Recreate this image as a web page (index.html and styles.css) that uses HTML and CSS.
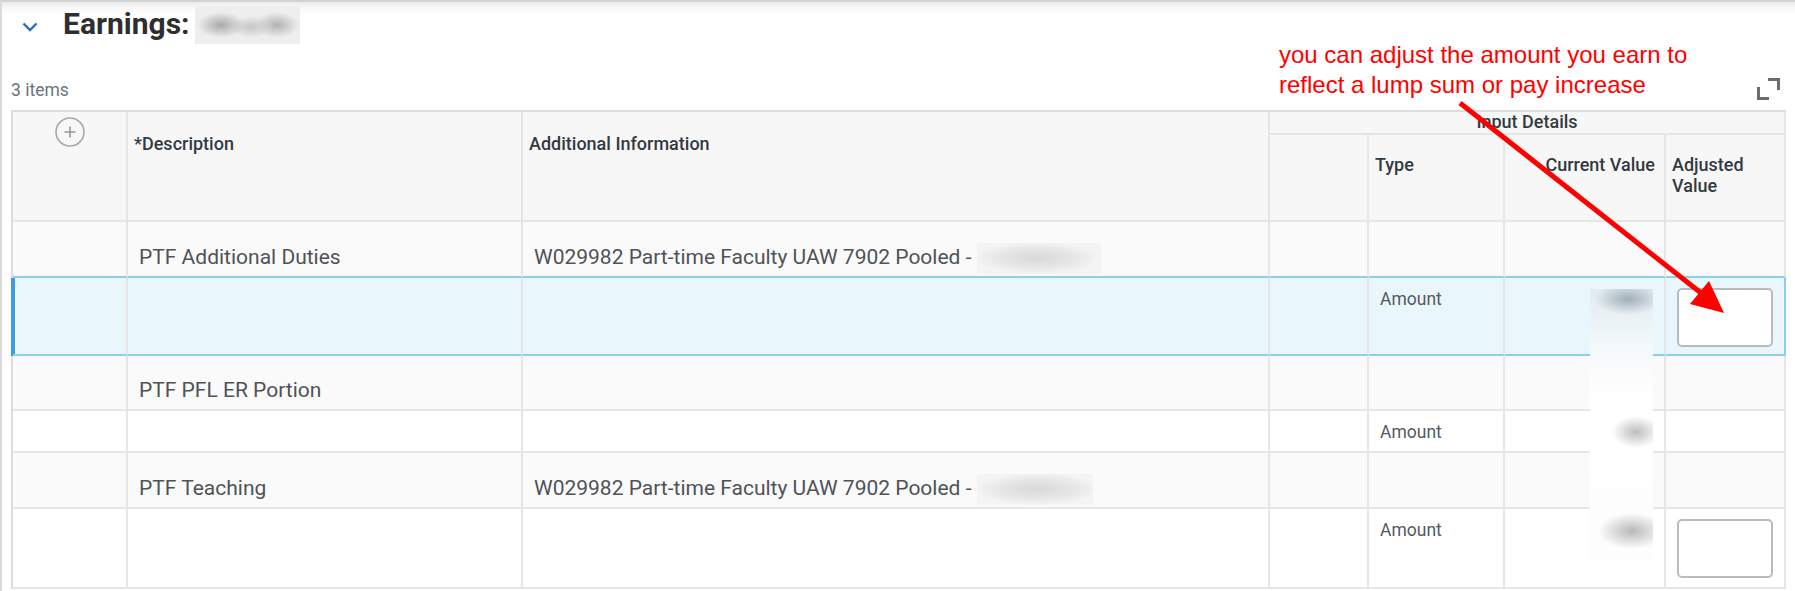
FILE: index.html
```html
<!DOCTYPE html>
<html lang="en">
<head>
<meta charset="utf-8">
<title>Earnings</title>
<link rel="stylesheet" href="styles.css">
</head>
<body>
<div class="panel">
  <div class="head">
    <svg class="chev" width="16" height="12" viewBox="0 0 16 12"><polyline points="1.5,2.5 8,9 14.5,2.5" fill="none" stroke="#2a6ebb" stroke-width="2.4"/></svg>
    <h2 class="title">Earnings:</h2>
    <span class="blur-title"></span>
  </div>
  <div class="meta">
    <span class="count">3 items</span>
    <svg class="expand" width="23" height="23" viewBox="0 0 23 23"><path d="M11 2.5H21.5V13M1.5 10V21.5H12" fill="none" stroke="#6c6c6c" stroke-width="3"/></svg>
  </div>
  <div class="grid-wrap">
    <table class="grid">
      <colgroup>
        <col class="w1"><col class="w2"><col class="w3"><col class="w4"><col class="w5"><col class="w6"><col class="w7">
      </colgroup>
      <thead>
        <tr class="hr1">
          <th rowspan="2" class="c-add"><svg width="30" height="30" viewBox="0 0 30 30"><circle cx="15" cy="15" r="14" fill="none" stroke="#a8a8a8" stroke-width="1.6"/><path d="M15 9.5V20.5M9.5 15H20.5" stroke="#999" stroke-width="1.6"/></svg></th>
          <th rowspan="2" class="h-top">*Description</th>
          <th rowspan="2" class="h-top">Additional Information</th>
          <th colspan="4" class="grp">Input Details</th>
        </tr>
        <tr class="hr2">
          <th class="h-sub"></th>
          <th class="h-sub">Type</th>
          <th class="h-sub num">Current Value</th>
          <th class="h-sub">Adjusted<br>Value</th>
        </tr>
      </thead>
      <tbody>
        <tr class="main r1 pre-sel">
          <td></td>
          <td>PTF Additional Duties</td>
          <td>W029982 Part-time Faculty UAW 7902 Pooled - <span class="blur-inline"></span></td>
          <td></td><td></td><td></td><td></td>
        </tr>
        <tr class="sub r2 sel">
          <td></td><td></td><td></td><td></td>
          <td>Amount</td>
          <td></td>
          <td class="c-field"><span class="field"></span></td>
        </tr>
        <tr class="main r3">
          <td></td>
          <td>PTF PFL ER Portion</td>
          <td></td><td></td><td></td><td></td><td></td>
        </tr>
        <tr class="sub r4">
          <td></td><td></td><td></td><td></td>
          <td>Amount</td>
          <td></td><td></td>
        </tr>
        <tr class="main r5">
          <td></td>
          <td>PTF Teaching</td>
          <td>W029982 Part-time Faculty UAW 7902 Pooled - <span class="blur-inline short"></span></td>
          <td></td><td></td><td></td><td></td>
        </tr>
        <tr class="sub r6">
          <td></td><td></td><td></td><td></td>
          <td>Amount</td>
          <td></td>
          <td class="c-field"><span class="field"></span></td>
        </tr>
      </tbody>
    </table>
    <div class="blur-col"></div>
  </div>
  <p class="note">you can adjust the amount you earn to<br>reflect a lump sum or pay increase</p>
  <svg class="arrow" width="1795" height="591" viewBox="0 0 1795 591"><line x1="1460" y1="103" x2="1701" y2="293" stroke="#ff0000" stroke-width="5"/><polygon points="1690,304 1709,281 1724,313" fill="#ff0000"/></svg>
</div>
</body>
</html>
```

FILE: styles.css
```css
* { box-sizing: border-box; }
html, body { margin: 0; background: #fff; }
body {
  font-family: Roboto, "Noto Sans", "Liberation Sans", sans-serif;
  color: #505458;
}
.panel {
  position: relative;
  height: 591px;
  border-top: 2px solid #d2d2d2;
  border-left: 2px solid #dadada;
  padding: 0 9px;
  background: linear-gradient(#ebebeb, #f7f7f7 5px, #fff 13px);
}
.head {
  display: flex;
  align-items: flex-start;
  height: 44px;
  padding-left: 11px;
}
.chev { margin-top: 19px; flex: none; }
.title {
  margin: 4px 0 0 25px;
  font-size: 30px;
  line-height: 35px;
  font-weight: 700;
  color: #2e2e2e;
}
.blur-title {
  margin: 4px 0 0 5px;
  width: 105px;
  height: 38px;
  background:
    radial-gradient(ellipse 24px 13px at 26px 19px, #a9a9a9, rgba(238,238,238,0)),
    radial-gradient(ellipse 20px 11px at 56px 21px, #c4c4c4, rgba(238,238,238,0)),
    radial-gradient(ellipse 22px 13px at 82px 19px, #b2b2b2, rgba(238,238,238,0)),
    #eeeeee;
}
.meta {
  display: flex;
  justify-content: space-between;
  align-items: flex-start;
  margin-top: 34px;
  height: 21px;
}
.count {
  font-size: 17.5px;
  line-height: 21px;
  color: #6b747d;
}
.expand { margin: -3px 6px 0 0; }
.grid-wrap { position: relative; margin-top: 9px; }
.grid {
  border-collapse: separate;
  border-spacing: 0;
  table-layout: fixed;
  width: 1775px;
  border-top: 2px solid #dcdcdc;
  border-left: 2px solid #dcdcdc;
}
.w1 { width: 115px; }
.w2 { width: 395px; }
.w3 { width: 747px; }
.w4 { width: 99px; }
.w5 { width: 136px; }
.w6 { width: 161px; }
.w7 { width: 120px; }
.grid th, .grid td {
  border-right: 2px solid #e6e6e6;
  border-bottom: 2px solid #e6e6e6;
  padding: 0;
}
.grid th {
  background: #f7f7f7;
  font-size: 18px;
  line-height: 21px;
  font-weight: 500;
  color: #333a42;
  text-align: left;
  vertical-align: top;
  padding-left: 6px;
}
.hr1 { height: 23px; }
.hr2 { height: 87px; }
.grid th.c-add { padding: 5px 0 0; text-align: center; }
.c-add svg { display: block; margin: 0 auto; }
.grid th.h-top { padding-top: 21px; }
.grid th.grp {
  text-align: center;
  line-height: 19px;
  padding-left: 0;
}
.grid th.h-sub { padding-top: 19px; }
.grid th.num { text-align: right; padding-right: 9px; }
.r1 { height: 56px; }
.r2 { height: 78px; }
.r3 { height: 55px; }
.r4 { height: 42px; }
.r5 { height: 56px; }
.r6 { height: 80px; }
.main td {
  background: #fafafa;
  font-size: 21px;
  line-height: 24px;
  vertical-align: bottom;
  padding: 0 11px 7px;
  white-space: nowrap;
  color: #4f5357;
}
.sub td {
  background: #fff;
  font-size: 17.5px;
  line-height: 21px;
  vertical-align: top;
  padding: 11px 11px 0;
  color: #55595d;
}
.sub td.c-field { padding: 10px 0 0 11px; }
.pre-sel td { border-bottom-color: #8fcdef; }
.sel td {
  background: #e9f6fc;
  border-bottom-color: #8fcdef;
}
.sel td:first-child { box-shadow: -2px 0 0 #3b9fdf, inset 2px 0 0 #3b9fdf; }
.sel td:last-child { border-right-color: #8fcdef; }
.field {
  display: block;
  width: 96px;
  height: 59px;
  border: 2px solid #b6bcc2;
  border-radius: 5px;
  background: #fff;
}
.blur-inline {
  display: inline-block;
  width: 124px;
  height: 31px;
  margin: -2px 0 -5px 0;
  vertical-align: -5px;
  background: radial-gradient(ellipse 62px 16px at 60px 15px, #d9d9d9, #e6e6e6 60%, #f4f4f4);
}
.blur-inline.short { width: 116px; }
.blur-col {
  position: absolute;
  left: 1579px;
  top: 179px;
  width: 63px;
  height: 272px;
  background:
    radial-gradient(ellipse 34px 16px at 38px 10px, rgba(150,165,176,.85), rgba(255,255,255,0)),
    radial-gradient(ellipse 24px 16px at 46px 143px, rgba(155,155,155,.65), rgba(255,255,255,0)),
    radial-gradient(ellipse 34px 18px at 42px 242px, rgba(155,155,155,.7), rgba(255,255,255,0)),
    linear-gradient(#e2ebf0, #f3f9fc 60px, #fbfbfb 80px, #fff 110px, #fdfdfd 272px);
}
.note {
  position: absolute;
  left: 1277px;
  top: 38px;
  margin: 0;
  font-family: "Liberation Sans", Arial, sans-serif;
  font-size: 24px;
  line-height: 30px;
  color: #ff0000;
  white-space: nowrap;
}
.arrow {
  position: absolute;
  left: -2px;
  top: -2px;
  pointer-events: none;
}
```
